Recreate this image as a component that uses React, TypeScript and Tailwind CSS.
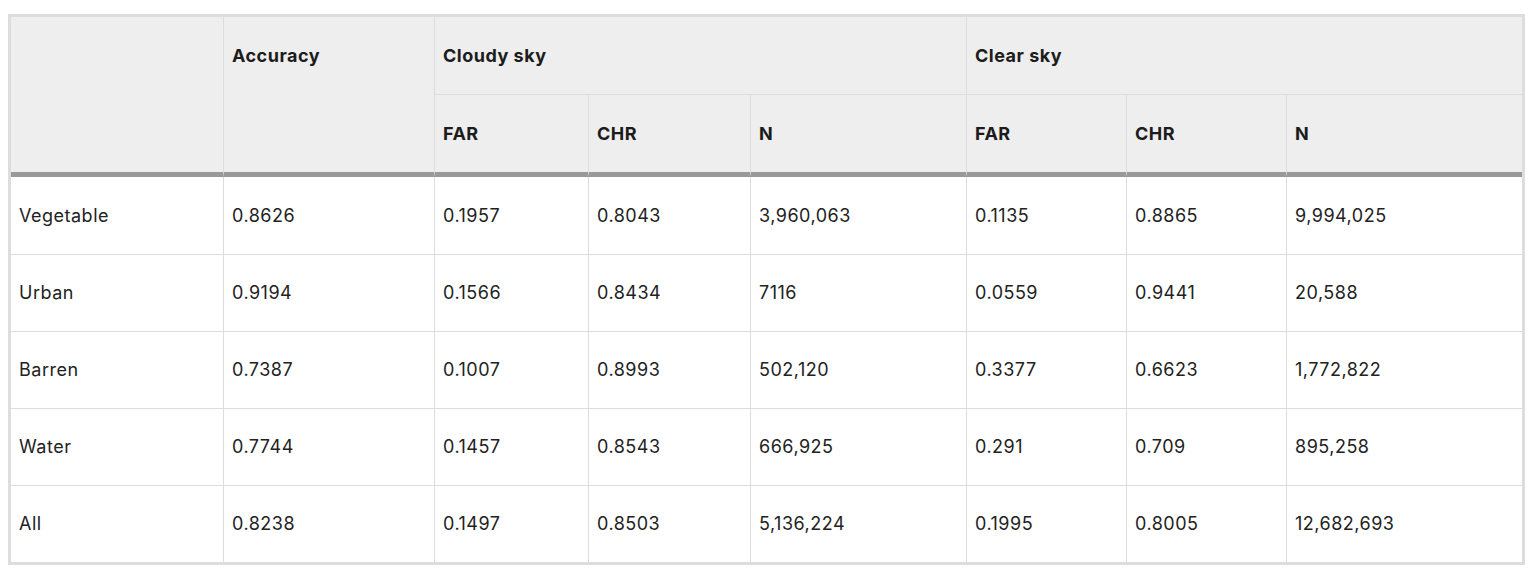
import React from "react";

const cols = "grid-cols-[213px_211px_154px_162px_216px_160px_160px_235px]";

const rows: string[][] = [
  ["Vegetable", "0.8626", "0.1957", "0.8043", "3,960,063", "0.1135", "0.8865", "9,994,025"],
  ["Urban", "0.9194", "0.1566", "0.8434", "7116", "0.0559", "0.9441", "20,588"],
  ["Barren", "0.7387", "0.1007", "0.8993", "502,120", "0.3377", "0.6623", "1,772,822"],
  ["Water", "0.7744", "0.1457", "0.8543", "666,925", "0.291", "0.709", "895,258"],
  ["All", "0.8238", "0.1497", "0.8503", "5,136,224", "0.1995", "0.8005", "12,682,693"],
];

const rowHeights = ["h-[78px]", "h-[77px]", "h-[77px]", "h-[77px]", "h-[76px]"];

export default function App() {
  return (
    <div className="w-[1536px] h-[575px] bg-white pt-[14px] pl-[8px]" style={{ fontFamily: "Inter, 'Liberation Sans', sans-serif" }}>
      <div className="w-[1517px] border-[3px] border-[#dddddd] text-[18px] leading-6 tracking-[0.5px] text-[#222222]">
        {/* Header */}
        <div className={`grid ${cols} grid-rows-[78px_82px] bg-[#eeeeee] font-bold text-[#1c1c1c]`}>
          <div className="row-span-2 border-r border-b-[5px] border-r-[#dddddd] border-b-[#999999]" />
          <div className="row-span-2 border-r border-b-[5px] border-r-[#dddddd] border-b-[#999999] pl-2 pt-[27px]">Accuracy</div>
          <div className="col-span-3 flex items-center border-r border-b border-[#dddddd] pl-2">Cloudy sky</div>
          <div className="col-span-3 flex items-center border-b border-[#dddddd] pl-2">Clear sky</div>
          {["FAR", "CHR", "N", "FAR", "CHR", "N"].map((t, i) => (
            <div
              key={i}
              className={`flex items-center pl-2 border-b-[5px] border-b-[#999999] ${i < 5 ? "border-r border-r-[#dddddd]" : ""}`}
            >
              {t}
            </div>
          ))}
        </div>
        {/* Body */}
        {rows.map((r, ri) => (
          <div key={ri} className={`grid ${cols} ${rowHeights[ri]}`}>
            {r.map((c, ci) => (
              <div
                key={ci}
                className={`flex items-center pl-2 border-[#dddddd] ${ci < 7 ? "border-r" : ""} ${ri < 4 ? "border-b" : ""}`}
              >
                {c}
              </div>
            ))}
          </div>
        ))}
      </div>
    </div>
  );
}
